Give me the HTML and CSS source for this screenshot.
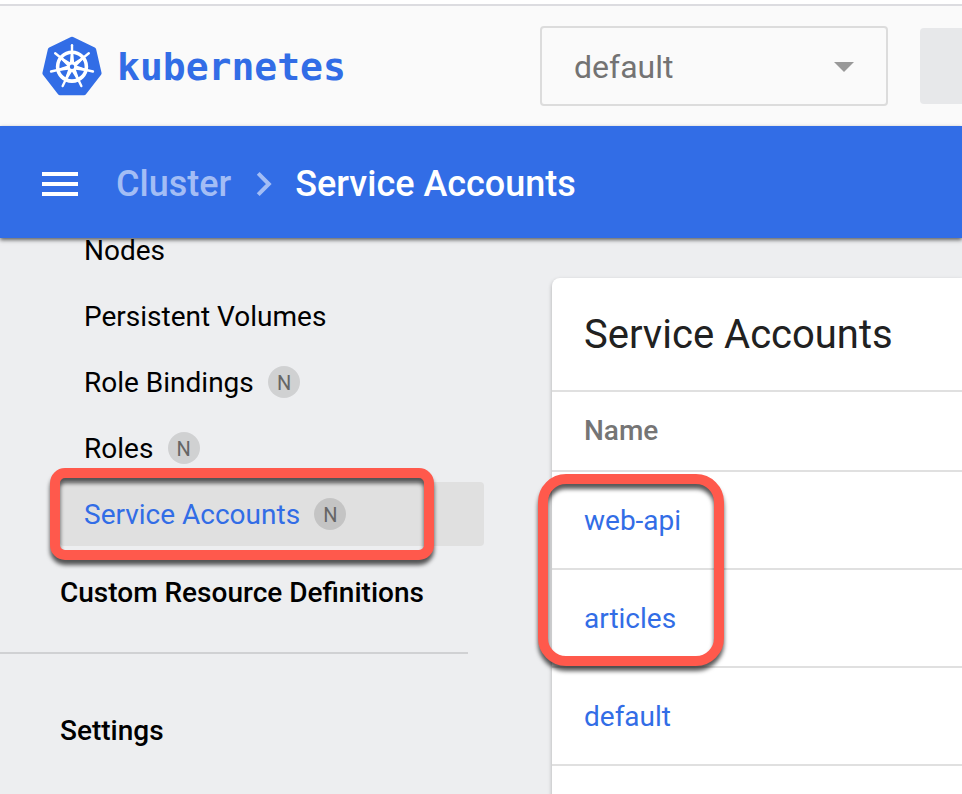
FILE: index.html
```
<!DOCTYPE html>
<html lang="en">
<head>
<meta charset="utf-8">
<title>Kubernetes Dashboard</title>
<link rel="stylesheet" href="styles.css">
</head>
<body>
<div class="app">
  <header class="topbar">
    <div class="brand">
      <svg class="logo" width="60" height="62" viewBox="0 0 60 62">
        <path class="logo-bg" d="M30 3.200 L8.300 13.700 L2.900 37.300 L18 56.700 H42 L57.100 37.300 L51.700 13.700 Z"/>
        <g transform="translate(30 30.700)">
          <circle class="ring" r="14.400"/>
          <g id="spoke"><path class="spoke" d="M0 -21.500 V-5"/><path class="arm" d="M-1 -14.500 H1 L2.200 -4 H-2.200 Z"/></g>
          <use href="#spoke" transform="rotate(51.430)"/>
          <use href="#spoke" transform="rotate(102.860)"/>
          <use href="#spoke" transform="rotate(154.290)"/>
          <use href="#spoke" transform="rotate(205.710)"/>
          <use href="#spoke" transform="rotate(257.140)"/>
          <use href="#spoke" transform="rotate(308.570)"/>
          <circle class="hub" r="3.600"/>
        </g>
      </svg>
      <span class="wordmark">kubernetes</span>
    </div>
    <div class="namespace"><span>default</span><i class="caret"></i></div>
    <div class="search"></div>
  </header>
  <nav class="actionbar">
    <svg class="menu" width="36" height="24" viewBox="0 0 36 24"><path d="M0 0h36v4H0zM0 10h36v4H0zM0 20h36v4H0z"/></svg>
    <span class="crumb">Cluster</span>
    <svg class="chevron" width="16" height="24" viewBox="0 0 16 24"><path d="M2.200 1.400 L12.800 12 L2.200 22.600"/></svg>
    <span class="current">Service Accounts</span>
  </nav>
  <main class="main">
    <aside class="sidebar">
      <div class="item">Nodes</div>
      <div class="item">Persistent Volumes</div>
      <div class="item">Role Bindings<span class="badge">N</span></div>
      <div class="item">Roles<span class="badge">N</span></div>
      <div class="item selected">Service Accounts<span class="badge">N</span><div class="mark mark-nav"></div></div>
      <div class="group">Custom Resource Definitions</div>
      <div class="divider"></div>
      <div class="group settings">Settings</div>
    </aside>
    <section class="card">
      <h1 class="title">Service Accounts</h1>
      <div class="head">Name</div>
      <div class="row">web-api<div class="mark mark-rows"></div></div>
      <div class="row">articles</div>
      <div class="row">default</div>
    </section>
  </main>
</div>
</body>
</html>
```
FILE: styles.css
```
* { box-sizing: border-box; }
body { margin: 0; font-family: Roboto, sans-serif; background: #fff; }
.app { width: 962px; height: 794px; overflow: hidden; display: flex; flex-direction: column; }
.topbar { margin-top: 4px; height: 122px; border-top: 2px solid #dcdce0; background: #fafafa; display: flex; align-items: flex-start; flex: none; padding-left: 42px; }
.brand { width: 498px; display: flex; align-items: center; height: 120px; padding-top: 2px; }
.logo { flex: none; }
.logo-bg { fill: #326de6; stroke: #326de6; stroke-width: 5; stroke-linejoin: round; }
.ring { fill: none; stroke: #fff; stroke-width: 3.6; }
.spoke { stroke: #fff; stroke-width: 2.4; stroke-linecap: round; }
.arm { fill: #fff; }
.hub { fill: #326de6; stroke: #fff; stroke-width: 2.8; }
.wordmark { margin-left: 15px; font: bold 38px/60px "DejaVu Sans Mono", monospace; color: #326de6; }
.namespace { margin-top: 20px; width: 348px; height: 80px; border: 2px solid #dcdcdc; border-radius: 4px; padding: 2px 32px 0; display: flex; align-items: center; justify-content: space-between; font-size: 32px; color: #737373; flex: none; }
.caret { width: 20px; height: 10px; background: #999; clip-path: polygon(0 0, 100% 0, 50% 100%); }
.search { margin: 22px 0 0 32px; width: 42px; height: 76px; background: #e7e8ea; border-radius: 4px 0 0 4px; flex: none; }
.actionbar { height: 112px; flex: none; background: #326de6; color: #fff; display: flex; align-items: center; padding: 4px 0 0 42px; font-size: 36px; font-weight: 500; position: relative; z-index: 1; box-shadow: 0 2px 4px rgba(0,0,0,.6); }
.menu { fill: #fff; }
.crumb { margin-left: 38px; color: #a3bdf5; }
.chevron { margin: 0 23px 0 25px; fill: none; stroke: #a3bdf5; stroke-width: 4; }
.main { flex: 1; min-height: 0; background: #edeef0; display: flex; align-items: flex-start; overflow: hidden; }
.sidebar { width: 552px; margin-top: -20px; flex: none; font-size: 28px; color: #000; }
.item { width: 424px; height: 64px; margin: 0 0 2px 60px; padding-left: 24px; display: flex; align-items: center; border-radius: 4px; position: relative; }
.selected { background: #e0e0e0; color: #326de6; }
.badge { width: 32px; height: 32px; margin-left: 14.4px; border-radius: 50%; background: rgba(0,0,0,.12); color: #666; font-size: 20px; line-height: 34px; text-align: center; }
.group { height: 64px; padding-left: 60px; line-height: 64px; font-weight: 500; }
.item + .group { margin-top: 15px; }
.divider { width: 468px; height: 2px; margin-top: 27px; background: #d0d1d3; }
.settings { margin-top: 45px; }
.card { width: 410px; height: 600px; margin-top: 40px; flex: none; background: #fff; border-radius: 8px 0 0 0; box-shadow: 0 2px 4px rgba(0,0,0,.28); font-size: 28px; }
.title, .head, .row { margin: 0; padding-left: 32px; border-bottom: 2px solid #e0e0e0; }
.title { height: 114px; font-size: 40px; font-weight: 400; line-height: 114px; color: #212121; }
.head { height: 80px; line-height: 78px; font-weight: 500; color: #757575; }
.row { height: 98px; line-height: 97px; color: #326de6; position: relative; }
.mark { position: absolute; z-index: 1; border: 10px solid #ff594c; filter: drop-shadow(0 5px 2px rgba(0,0,0,.65)); }
.mark-nav { left: -10px; top: -14px; width: 384px; height: 92px; border-radius: 15px; }
.mark-rows { left: -14px; top: 2px; width: 186px; height: 192px; border-radius: 28px; }
```
